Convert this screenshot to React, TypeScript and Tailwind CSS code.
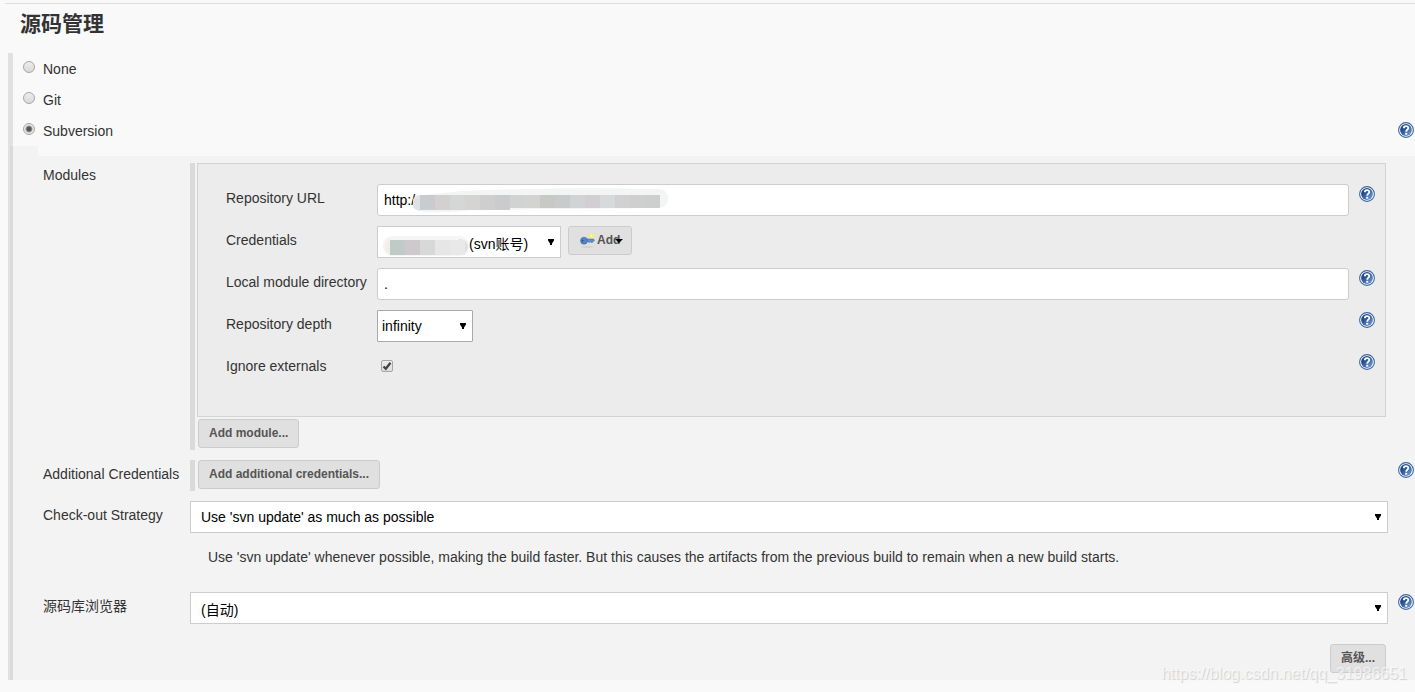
import type { ReactNode, SelectHTMLAttributes } from 'react'

const urlBlocks = ['#c8ccce', '#d3d0d0', '#d5d7d7', '#d6d3d3', '#cecece', '#cbcbcd', '#d1d3d3', '#d3d3d3', '#c8c9c4', '#c9cacc', '#d1d4d5', '#d3cfd1', '#d6dada', '#d1d1d3', '#d0cfcf', '#cdcece']
const userBlocks = ['#c0cac7', '#cec9cd', '#d7d9d9', '#e6e6e6', '#e9e9e9']

function HelpIcon() {
  return (
    <svg viewBox="0 0 16 16" className="block h-4 w-4">
      <defs>
        <linearGradient id="help" x1="0" y1="0" x2="1" y2="1">
          <stop offset="0.3" stopColor="#204a87" />
          <stop offset="1" stopColor="#7da7dc" />
        </linearGradient>
      </defs>
      <circle cx="8" cy="8" r="7.4" fill="#fff" stroke="#3c65a4" strokeWidth="1.1" />
      <circle cx="8" cy="8" r="5.9" fill="url(#help)" />
      <path d="M5.800 6.300C5.800 3.400 10.400 3.400 10.300 6.100C10.200 7.700 8.200 7.700 8.200 9.700" fill="none" stroke="#fff" strokeWidth="1.800" />
      <rect x="7.2" y="10.8" width="2" height="1.9" fill="#fff" />
    </svg>
  )
}

function Help() {
  return (
    <button type="button" aria-label="Help" className="mt-0.5 block self-start">
      <HelpIcon />
    </button>
  )
}

function KeyIcon() {
  return (
    <svg viewBox="0 0 16 16" className="h-4 w-4 shrink-0">
      <ellipse cx="8" cy="15" rx="6" ry="0.8" fill="#cdcdcd" />
      <circle cx="12.5" cy="4" r="2.4" fill="#f9f25c" />
      <circle cx="12.5" cy="4" r="1" fill="#fffcc0" />
      <path d="M8 7h6.500L15.500 8.300 14.500 9.500h-1v1h-1.500v-1h-1v.8H9.500v-.8H8Z" fill="#5f8fce" stroke="#41699f" strokeWidth="0.5" />
      <circle cx="5" cy="8.700" r="3.500" fill="#5585c5" stroke="#41699f" strokeWidth="0.600" />
      <circle cx="3.600" cy="8.700" r="1" fill="#31578e" />
    </svg>
  )
}

function Arrow({ className = '' }: { className?: string }) {
  return (
    <svg viewBox="0 0 6 6" className={`pointer-events-none absolute h-1.5 w-1.5 ${className}`}>
      <path d="M0 0h6v1.500L4 4.500V6H2V4.500L0 1.500Z" fill="#000" />
    </svg>
  )
}

type SelectProps = SelectHTMLAttributes<HTMLSelectElement> & { box?: string }

function Select({ box = '', className = '', children, ...props }: SelectProps) {
  return (
    <div className={`relative ${box}`}>
      <select {...props} className={`block h-8 w-full appearance-none border bg-white leading-5 text-black ${className}`}>
        {children}
      </select>
      <Arrow className="top-[13px] right-[7px]" />
    </div>
  )
}

function Button({ className = '', children }: { className?: string; children: ReactNode }) {
  return (
    <button
      type="button"
      className={`relative flex h-[29px] items-center rounded-[3px] border border-[#ccc] bg-[#e0e0e0] px-2.5 pb-0.5 text-xs font-bold text-[#555] ${className}`}
    >
      {children}
    </button>
  )
}

function Radio({ id, label, checked }: { id: string; label: string; checked?: boolean }) {
  return (
    <div className="flex h-[31px] items-start pl-2.5">
      <input
        type="radio"
        name="scm"
        id={id}
        defaultChecked={checked}
        className="mt-2 h-3 w-3 appearance-none rounded-full border border-[#a6a6a6] bg-linear-to-b from-[#ededed] to-[#d9d9d9] checked:bg-[radial-gradient(circle,#555_0,#555_2px,#e8e8e8_4px)]"
      />
      <label htmlFor={id} className="pl-2 leading-8">{label}</label>
      {checked && (
        <div className="mt-[5px] ml-auto pr-px">
          <Help />
        </div>
      )}
    </div>
  )
}

type RowProps = { label: string; htmlFor?: string; help?: boolean; className?: string; children: ReactNode }

function Row({ label, htmlFor, help, className = 'pt-2.5 leading-7', children }: RowProps) {
  return (
    <div className={`flex pl-[30px] ${className}`}>
      <label htmlFor={htmlFor} className="w-[147px] shrink-0">{label}</label>
      <div className="min-w-0 flex-1">{children}</div>
      <div className="flex w-[27px] shrink-0 justify-end pr-px">{help && <Help />}</div>
    </div>
  )
}

function ModuleRow({ label, htmlFor, help, children }: RowProps) {
  return (
    <div className="flex h-8">
      <label htmlFor={htmlFor} className="w-[151px] shrink-0 leading-7">{label}</label>
      <div className="relative flex min-w-0 flex-1">{children}</div>
      <div className="flex w-[26px] shrink-0 justify-end">{help && <Help />}</div>
    </div>
  )
}

export default function App() {
  return (
    <main className="relative min-h-screen bg-[#f9f9f9] pt-[3px] pb-3 font-['Liberation_Sans','Noto_Sans_CJK_SC',sans-serif] text-sm text-[#333]">
      <div className="ml-[5px] border-t border-[#ddd]" />
      <h1 className="h-[49px] pl-5 text-[21px] leading-10 font-bold">源码管理</h1>

      <section className="ml-2">
        <div className="border-l-[5px] border-[#e1e1e1]">
          <Radio id="none" label="None" />
          <Radio id="git" label="Git" />
          <Radio id="svn" label="Subversion" checked />
        </div>

        <div className="border-l-2 border-[#e1e1e1]">
          <div className="border-l-[3px] border-[#dadada] bg-[#f3f3f3] pb-[7px]">
            <div className="ml-[25px] h-2.5 bg-[#f9f9f9]" />

            <Row label="Modules" className="pt-[7px] leading-6">
              <div className="border-l-[5px] border-[#dadada] pr-0.5 pb-0.5 pl-0.5">
                <div className="flex flex-col gap-2.5 border border-[#d3d3d3] bg-[#ececec] pt-5 pr-2.5 pb-8 pl-7">
                  <ModuleRow label="Repository URL" htmlFor="url" help>
                    <input id="url" defaultValue="http:/" className="h-8 w-full rounded-[3px] border border-[#ccc] bg-white px-1.5 text-black" />
                    <svg viewBox="0 0 256 26" className="pointer-events-none absolute top-1 left-9 h-[26px] w-64">
                      <path d="M10 24a10 10 0 0 1 0-17L50 3Q140-1 246 1a9 9 0 0 1 0 19L60 22Q35 25 10 24Z" fill="#f3f4f4" />
                      <path d="M8 23a9 8 0 0 1 0-16Z" fill="#e0e1e2" />
                      {urlBlocks.map((color, i) => (
                        <rect key={i} x={7 + i * 15} y="7" width="15" height={i < 6 ? 15 : 13} fill={color} />
                      ))}
                    </svg>
                  </ModuleRow>
                  <ModuleRow label="Credentials" htmlFor="credentials">
                    <Select id="credentials" box="w-[184px]" className="border-[#ccc] pt-1 pl-[91px]">
                      <option>(svn账号)</option>
                    </Select>
                    <svg viewBox="0 0 86 20" className="pointer-events-none absolute top-2.5 left-1.5 h-5 w-[86px]">
                      <rect width="86" height="20" rx="9" fill="#f5f5f5" />
                      <path d="M10 3a8 8 0 0 0 0 16Z" fill="#f1efe8" />
                      <path d="M76 3a9 8 0 0 1 0 16Z" fill="#dedfe1" />
                      {userBlocks.map((color, i) => (
                        <rect key={i} x={7 + i * 15} y="4" width="15" height="15" fill={color} />
                      ))}
                    </svg>
                    <Button className="ml-[7px] w-16 gap-0.5">
                      <KeyIcon />
                      Add
                      <svg viewBox="0 0 8 4" className="absolute top-3 right-2 h-1 w-2">
                        <path d="M0 0h8L4 4Z" fill="#000" />
                      </svg>
                    </Button>
                  </ModuleRow>
                  <ModuleRow label="Local module directory" htmlFor="local" help>
                    <input id="local" defaultValue="." className="h-8 w-full rounded-[3px] border border-[#ccc] bg-white px-1.5 text-black" />
                  </ModuleRow>
                  <ModuleRow label="Repository depth" htmlFor="depth" help>
                    <Select id="depth" box="w-24" className="rounded-[1px] border-[#a9a9a9] pl-1">
                      <option>infinity</option>
                    </Select>
                  </ModuleRow>
                  <ModuleRow label="Ignore externals" htmlFor="externals" help>
                    <input type="checkbox" id="externals" defaultChecked className="mt-2 ml-1 h-3 w-3 appearance-none rounded-[2px] border border-[#a6a6a6] bg-linear-to-b from-[#ededed] to-[#dedede]" />
                    <svg viewBox="0 0 12 12" className="pointer-events-none absolute top-2 left-1 h-3 w-3">
                      <path d="M2.500 6.500l2.300 2.300L9.500 2.800" fill="none" stroke="#444" strokeWidth="2.300" />
                    </svg>
                  </ModuleRow>
                </div>
                <Button className="mt-0.5 ml-px">Add module...</Button>
              </div>
            </Row>

            <Row label="Additional Credentials" help>
              <div className="border-l-[5px] border-[#dadada] pb-0.5 pl-[3px]">
                <Button>Add additional credentials...</Button>
              </div>
            </Row>

            <Row label="Check-out Strategy" htmlFor="strategy">
              <Select id="strategy" className="border-[#ccc] pl-2.5">
                <option>Use 'svn update' as much as possible</option>
              </Select>
              <p className="h-[49px] pt-3.5 pl-[18px] leading-5">
                Use 'svn update' whenever possible, making the build faster. But this causes the artifacts from the previous build to remain when a new build starts.
              </p>
            </Row>

            <Row label="源码库浏览器" htmlFor="browser" help>
              <Select id="browser" className="border-[#ccc] pt-1 pl-2.5">
                <option>(自动)</option>
              </Select>
            </Row>

            <div className="flex justify-end pt-5 pr-[29px]">
              <Button>高级...</Button>
            </div>
          </div>
        </div>
      </section>

      <p className="pointer-events-none absolute right-2 bottom-1.5 text-base text-white/60 [text-shadow:1px_1px_1px_#d0d0d0]">
        https://blog.csdn.net/qq_31986651
      </p>
    </main>
  )
}
